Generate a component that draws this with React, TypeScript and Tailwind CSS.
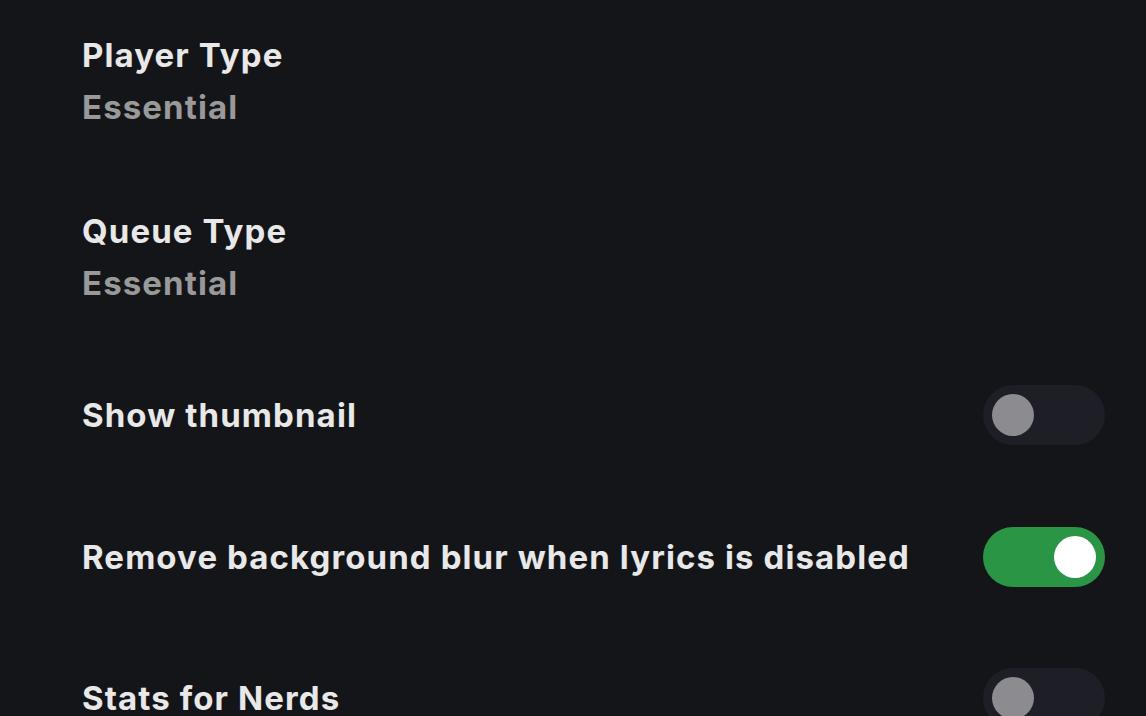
import React from "react";

function Toggle({ on }: { on: boolean }) {
  return (
    <div
      className={
        "w-[122px] h-[60px] rounded-full flex items-center px-[9px] shrink-0 " +
        (on ? "bg-[#2a9645] justify-end" : "bg-[#1d1e26] justify-start")
      }
    >
      <div
        className={
          "w-[42px] h-[42px] rounded-full " + (on ? "bg-white" : "bg-[#8c8c90]")
        }
      />
    </div>
  );
}

export default function App() {
  return (
    <div
      className="w-[1146px] h-[716px] overflow-hidden bg-[#141519] pl-[82px] pr-[41px] text-[33px] font-bold tracking-[1.1px]"
      style={{ fontFamily: "Inter, 'Noto Sans', sans-serif" }}
    >
      <div className="pt-[35px] flex flex-col">
        <div className="flex flex-col">
          <div className="leading-[40px] text-[#e8e8e8]">Player Type</div>
          <div className="leading-[40px] text-[#999999] mt-[12px]">Essential</div>
        </div>
        <div className="flex flex-col mt-[84px]">
          <div className="leading-[40px] text-[#e8e8e8]">Queue Type</div>
          <div className="leading-[40px] text-[#999999] mt-[12px]">Essential</div>
        </div>
        <div className="flex items-center justify-between mt-[82px] h-[60px]">
          <div className="leading-[40px] text-[#e8e8e8]">Show thumbnail</div>
          <Toggle on={false} />
        </div>
        <div className="flex items-center justify-between mt-[81px] h-[62px]">
          <div className="leading-[40px] text-[#e8e8e8]">Remove background blur when lyrics is disabled</div>
          <Toggle on={true} />
        </div>
        <div className="flex items-center justify-between mt-[80px] h-[60px]">
          <div className="leading-[40px] text-[#e8e8e8]">Stats for Nerds</div>
          <Toggle on={false} />
        </div>
      </div>
    </div>
  );
}
